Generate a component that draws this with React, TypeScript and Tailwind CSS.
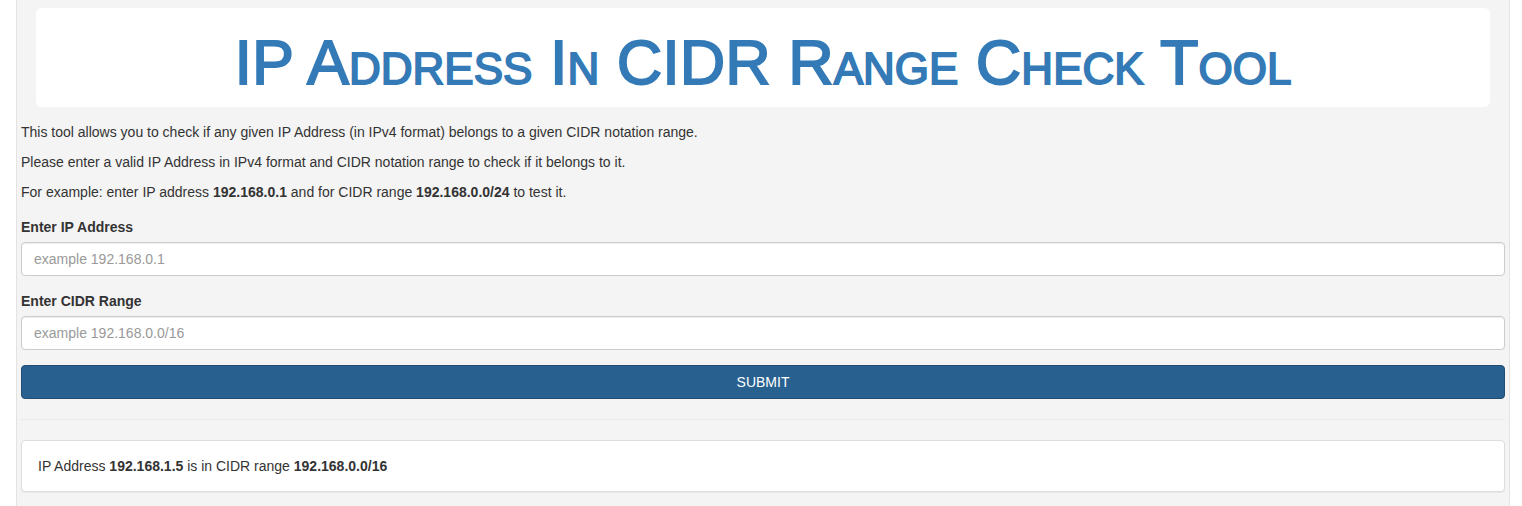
export default function App() {
  return (
    <div className="min-h-[506px] bg-white font-['Liberation_Sans',Arial,sans-serif] text-[14px] leading-[20px] text-[#333]">
      <div className="ml-4 min-h-[506px] w-[1494px] border-x border-[#e3e3e3] bg-[#f4f4f4] px-1 pt-2">
        <div className="mx-[15px] flex h-[99px] items-center justify-center rounded-md bg-white pt-[10px]">
          <h1 className="text-[63px] leading-none font-normal text-[#337ab7] [font-variant:small-caps] [-webkit-text-stroke:1.8px_#337ab7]">
            IP Address In CIDR Range Check Tool
          </h1>
        </div>

        <p className="mt-[15px] mb-[10px]">
          This tool allows you to check if any given IP Address (in IPv4 format) belongs to a given CIDR notation range.
        </p>
        <p className="mb-[10px]">
          Please enter a valid IP Address in IPv4 format and CIDR notation range to check if it belongs to it.
        </p>
        <p className="mb-[10px]">
          For example: enter IP address <b>192.168.0.1</b> and for CIDR range <b>192.168.0.0/24</b> to test it.
        </p>

        <form className="mt-[15px]" onSubmit={(e) => e.preventDefault()}>
          <div className="mb-[15px]">
            <label className="mb-[5px] block font-bold">Enter IP Address</label>
            <input
              type="text"
              placeholder="example 192.168.0.1"
              className="block h-[34px] w-full rounded border border-[#ccc] bg-white px-3 text-[14px] text-[#555] shadow-[inset_0_1px_1px_rgba(0,0,0,0.075)] outline-none placeholder:text-[#999]"
            />
          </div>
          <div className="mb-[15px]">
            <label className="mb-[5px] block font-bold">Enter CIDR Range</label>
            <input
              type="text"
              placeholder="example 192.168.0.0/16"
              className="block h-[34px] w-full rounded border border-[#ccc] bg-white px-3 text-[14px] text-[#555] shadow-[inset_0_1px_1px_rgba(0,0,0,0.075)] outline-none placeholder:text-[#999]"
            />
          </div>
          <button
            type="submit"
            className="block h-[34px] w-full rounded border border-[#204d74] bg-[#286090] text-[14px] text-white"
          >
            SUBMIT
          </button>
        </form>

        <hr className="my-5 border-t border-[#e8e8e8]" />

        <div className="rounded border border-[#ddd] bg-white px-4 py-[15px] shadow-[0_1px_1px_rgba(0,0,0,0.05)]">
          IP Address <b>192.168.1.5</b> is in CIDR range <b>192.168.0.0/16</b>
        </div>
      </div>
    </div>
  )
}
